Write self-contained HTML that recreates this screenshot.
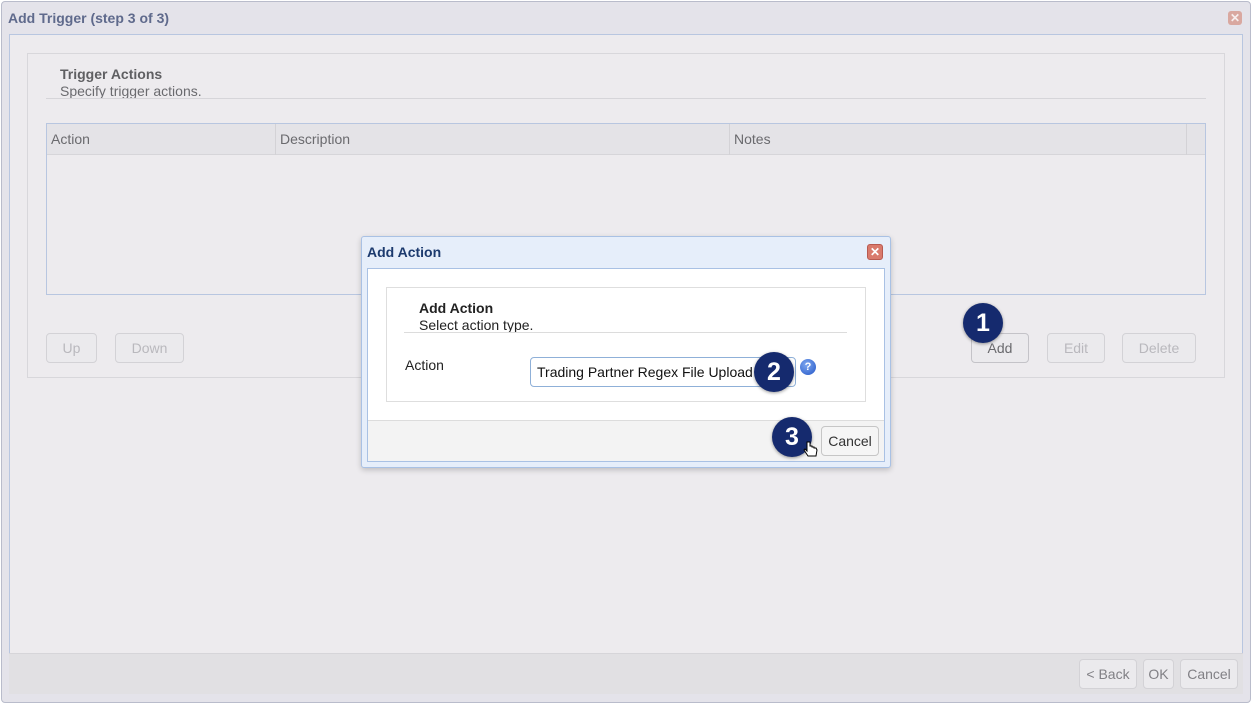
<!DOCTYPE html>
<html><head><meta charset="utf-8"><style>
*{box-sizing:border-box;margin:0;padding:0}
body{width:1252px;height:704px;background:#fff;font-family:"Liberation Sans",sans-serif;position:relative;overflow:hidden;font-size:14px}
.a{position:absolute}
.win{left:1px;top:1px;width:1250px;height:702px;border:1px solid #b9bccb;border-radius:4px;background:#e4e3ea}
.btn{position:absolute;height:30px;border:1px solid #d3d2d6;border-radius:4px;background:#ebeaed;color:#b9b8bd;font-size:14px;text-align:center;line-height:28px}
.circ{position:absolute;width:40px;height:40px;border-radius:50%;background:#152a6e;color:#fff;font-weight:bold;font-size:25px;text-align:center;line-height:40px;box-shadow:0 1px 3px rgba(0,0,0,.4)}
</style></head><body>
<div class="a win"></div>
<div class="a" style="left:8px;top:10px;font-weight:bold;color:#5f6a8c;font-size:14px">Add Trigger (step 3 of 3)</div>
<div class="a" style="left:1228px;top:11px;width:14px;height:14px;background:#d9a8a0;border-radius:3px;color:#f6eeee;font-size:12px;line-height:14px;text-align:center;font-weight:bold">✕</div>
<div class="a" style="left:9px;top:34px;width:1234px;height:620px;border:1px solid #b8c6e0;background:#edebee"></div>
<div class="a" style="left:9px;top:653px;width:1234px;height:41px;background:#e1e0e3;border-top:1px solid #d6d5d9"></div>
<div class="a" style="left:27px;top:53px;width:1198px;height:325px;border:1px solid #d8d7db"></div>
<div class="a" style="left:60px;top:66px;font-weight:bold;color:#5f5f62">Trigger Actions</div>
<div class="a" style="left:60px;top:83px;color:#6a6a6e">Specify trigger actions.</div>
<div class="a" style="left:46px;top:98px;width:1160px;height:1px;background:#d6d5d9"></div>
<div class="a" style="left:46px;top:123px;width:1160px;height:172px;border:1px solid #b8c6e0;background:#edebee"></div>
<div class="a" style="left:47px;top:124px;width:1158px;height:31px;background:#e4e3e7;border-bottom:1px solid #d6d5d9"></div>
<div class="a" style="left:275px;top:124px;width:1px;height:31px;background:#d3d2d6"></div>
<div class="a" style="left:729px;top:124px;width:1px;height:31px;background:#d3d2d6"></div>
<div class="a" style="left:1186px;top:124px;width:1px;height:31px;background:#d3d2d6"></div>
<div class="a" style="left:51px;top:131px;color:#6a6a6e">Action</div>
<div class="a" style="left:280px;top:131px;color:#6a6a6e">Description</div>
<div class="a" style="left:734px;top:131px;color:#6a6a6e">Notes</div>
<div class="btn" style="left:46px;top:333px;width:51px">Up</div>
<div class="btn" style="left:115px;top:333px;width:69px">Down</div>
<div class="btn" style="left:971px;top:333px;width:58px;color:#6a6a6e;border-color:#c4c3c8">Add</div>
<div class="btn" style="left:1047px;top:333px;width:58px">Edit</div>
<div class="btn" style="left:1122px;top:333px;width:74px">Delete</div>
<div class="btn" style="left:1079px;top:659px;width:58px;color:#818085">&lt; Back</div>
<div class="btn" style="left:1143px;top:659px;width:31px;color:#818085">OK</div>
<div class="btn" style="left:1180px;top:659px;width:58px;color:#818085">Cancel</div>
<div class="circ" style="left:963px;top:303px">1</div>

<div class="a" style="left:361px;top:236px;width:530px;height:232px;border:1px solid #a9c1e4;border-radius:3px;background:#e6eefa;box-shadow:0 2px 6px rgba(0,0,0,.2)"></div>
<div class="a" style="left:367px;top:244px;font-weight:bold;color:#1c3a6e">Add Action</div>
<div class="a" style="left:867px;top:244px;width:16px;height:16px;background:#d97a6c;border:1px solid #b85a50;border-radius:3px;color:#fff;font-size:12px;line-height:14px;text-align:center;font-weight:bold">✕</div>
<div class="a" style="left:367px;top:268px;width:518px;height:194px;border:1px solid #a9c1e4;background:#fff"></div>
<div class="a" style="left:368px;top:420px;width:516px;height:41px;background:#f3f3f3;border-top:1px solid #dcdcdc"></div>
<div class="a" style="left:386px;top:287px;width:480px;height:115px;border:1px solid #dedede"></div>
<div class="a" style="left:419px;top:300px;font-weight:bold;color:#222">Add Action</div>
<div class="a" style="left:419px;top:317px;color:#222">Select action type.</div>
<div class="a" style="left:404px;top:332px;width:443px;height:1px;background:#dcdcdc"></div>
<div class="a" style="left:405px;top:357px;color:#222">Action</div>
<div class="a" style="left:530px;top:357px;width:266px;height:30px;border:1px solid #8fb0d8;border-radius:4px;background:#fff"></div>
<div class="a" style="left:537px;top:364px;color:#111">Trading Partner Regex File Upload</div>
<div class="a" style="left:800px;top:359px;width:16px;height:16px;border-radius:50%;background:radial-gradient(circle at 40% 35%,#7fa8f0,#2356c7);color:#fff;font-size:11px;font-weight:bold;text-align:center;line-height:16px">?</div>
<div class="circ" style="left:754px;top:352px">2</div>
<div class="btn" style="left:821px;top:426px;width:58px;color:#333;background:#f5f5f5;border-color:#c6c6c6">Cancel</div>
<div class="circ" style="left:772px;top:417px">3</div>
<svg class="a" style="left:803px;top:440px" width="16" height="18" viewBox="0 0 16 18"><path d="M4 2v9l-2-2-1 1 4 6h8l1-6-1-2h-2V7h-2V6H7V2z" fill="#fff" stroke="#000" stroke-width="1"/></svg>
</body></html>
